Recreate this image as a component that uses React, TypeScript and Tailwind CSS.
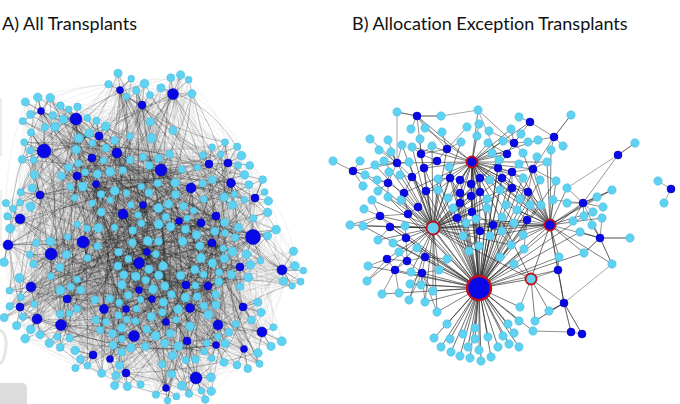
import React from "react"

type N = { x: number; y: number; r: number; d: boolean; ring?: boolean }
type E = { a: N; b: N; o: number; w: number; bend: number }

const LIGHT = "#5fd2f2"
const LIGHT_EDGE = "#45b6d8"
const DARK = "#0808e6"
const DARK_EDGE = "#0000a8"
const RED = "#c0121c"

function mulberry(seed: number) {
  let a = seed
  return () => {
    a = (a + 0x6d2b79f5) | 0
    let t = Math.imul(a ^ (a >>> 15), 1 | a)
    t = (t + Math.imul(t ^ (t >>> 7), 61 | t)) ^ t
    return ((t ^ (t >>> 14)) >>> 0) / 4294967296
  }
}

// dark hubs of panel A: x, y, radius
const hubsA: [number, number, number][] = [
  [120, 90, 3.6], [173, 94, 5.5], [142, 105, 4], [41, 111, 3.5], [76, 119, 6], [99, 136, 4],
  [44, 151, 7], [117, 153, 5], [92, 158, 4], [161, 170, 6], [209, 164, 4], [228, 163, 4],
  [191, 188, 5], [231, 183, 4.5], [77, 176, 4], [96, 184, 3.5], [40, 195, 4], [255, 198, 4],
  [20, 219, 5], [123, 214, 5], [143, 205, 3.5], [216, 216, 4], [201, 223, 4], [179, 221, 3.5],
  [83, 242, 6], [253, 237, 7.5], [8, 245, 5], [51, 254, 6], [212, 243, 4], [147, 252, 3.5],
  [139, 263, 5.5], [240, 267, 4], [282, 270, 5], [31, 287, 5], [186, 285, 4], [208, 286, 4],
  [67, 299, 4], [20, 307, 4], [139, 290, 3.5], [152, 299, 3.5], [104, 309, 4.5], [126, 309, 3.5],
  [190, 308, 4.5], [243, 307, 4], [37, 319, 5], [61, 325, 5.5], [166, 322, 3.5], [218, 325, 5],
  [262, 332, 5], [134, 336, 5.5], [187, 341, 4], [216, 345, 3.5], [244, 349, 3.5], [93, 355, 4],
  [110, 359, 3.5], [126, 373, 4], [196, 378, 6], [166, 388, 3.5],
]

function buildA() {
  const rnd = mulberry(11)
  const nodes: N[] = hubsA.map(([x, y, r]) => ({ x, y, r, d: true }))
  const free = (x: number, y: number, r: number, gap: number) =>
    nodes.every((n) => Math.hypot(n.x - x, n.y - y) > n.r + r + gap)
  const edges: E[] = []
  hubsA.forEach(([hx, hy, hr], hi) => {
    const cnt = 3 + Math.floor(rnd() * 3 + hr * 0.45)
    const dx = hx - 150
    const dy = hy - 235
    const far = Math.hypot(dx, dy)
    const out = Math.atan2(dy, dx)
    for (let k = 0; k < cnt; k++) {
      for (let t = 0; t < 14; t++) {
        const a = far > 105 ? out + (rnd() - 0.5) * 2.8 : rnd() * Math.PI * 2
        const dist = hr + 6 + rnd() * 12
        const x = hx + Math.cos(a) * dist
        const y = hy + Math.sin(a) * dist
        const r = 3.3 + rnd() * 1.3
        if (x < 3 || x > 306 || y < 64 || y > 401) continue
        if (free(x, y, r, 1.6)) {
          const n = { x, y, r, d: false }
          nodes.push(n)
          edges.push({ a: nodes[hi], b: n, o: 0.6, w: 0.6, bend: 0 })
          break
        }
      }
    }
  })
  for (let k = 0; k < 110; k++) {
    const a = rnd() * Math.PI * 2
    const s = Math.sqrt(rnd())
    const x = 150 + Math.cos(a) * s * 128
    const y = 233 + Math.sin(a) * s * 146
    const r = 3.3 + rnd() * 1.4
    if (free(x, y, r, 5)) nodes.push({ x, y, r, d: false })
  }
  const nh = hubsA.length
  for (let k = 0; k < 3200; k++) {
    const i = rnd() < 0.6 ? Math.floor(rnd() * nh) : Math.floor(rnd() * nodes.length)
    const j = Math.floor(rnd() * nodes.length)
    if (i === j) continue
    const strong = rnd() < 0.1
    edges.push({
      a: nodes[i],
      b: nodes[j],
      o: strong ? 0.45 : 0.11,
      w: strong ? 0.6 : 0.5,
      bend: (rnd() - 0.5) * 0.45,
    })
  }
  return { nodes, edges }
}

// panel B nodes: x, y, dark?
const rawB: [number, number, number][] = [
  [397, 112, 0], [417, 116, 1], [441, 116, 0], [478, 110, 0], [411, 129, 0], [425, 128, 0],
  [442, 132, 0], [467, 127, 0], [479, 124, 0], [489, 131, 0], [370, 139, 0], [388, 140, 0],
  [402, 145, 0], [420, 139, 0], [432, 146, 0], [447, 149, 1], [461, 142, 0], [477, 136, 0],
  [488, 143, 0], [492, 153, 0], [379, 150, 0], [391, 152, 0], [412, 147, 0], [421, 154, 1],
  [333, 161, 0], [353, 171, 1], [360, 161, 0], [375, 165, 0], [384, 161, 0], [397, 163, 1],
  [409, 162, 0], [424, 168, 1], [437, 161, 1], [449, 167, 0], [365, 175, 0], [377, 180, 0],
  [389, 172, 0], [400, 175, 0], [412, 177, 1], [438, 179, 0], [450, 178, 1], [460, 180, 1],
  [471, 184, 1], [480, 178, 1], [490, 180, 0], [498, 168, 1], [363, 186, 0], [378, 191, 0],
  [388, 183, 1], [404, 193, 1], [426, 191, 1], [438, 190, 0], [448, 198, 0], [460, 193, 1],
  [471, 196, 1], [480, 192, 1], [487, 199, 0], [372, 200, 0], [388, 197, 0], [401, 200, 0],
  [418, 207, 1], [408, 214, 1], [453, 208, 0], [460, 203, 1], [472, 212, 1], [487, 208, 0],
  [364, 209, 0], [380, 216, 1], [390, 227, 1], [350, 225, 0], [363, 226, 0], [457, 218, 1],
  [466, 223, 0], [476, 219, 0], [493, 225, 1],
  [519, 117, 0], [530, 122, 1], [571, 115, 0], [511, 129, 0], [521, 134, 0], [554, 137, 1],
  [514, 143, 1], [528, 142, 0], [538, 140, 0], [563, 146, 0], [503, 141, 0], [551, 150, 0],
  [635, 143, 0], [618, 155, 1], [507, 154, 1], [523, 153, 0], [537, 157, 0], [499, 160, 0],
  [519, 164, 0], [533, 169, 1], [547, 162, 0], [502, 178, 1], [512, 172, 1], [523, 178, 0],
  [540, 180, 0], [556, 181, 0], [567, 188, 0], [658, 181, 0], [671, 189, 1], [664, 203, 0],
  [612, 190, 0], [512, 188, 1], [528, 192, 1], [500, 190, 0], [597, 197, 0], [583, 203, 1],
  [520, 199, 0], [506, 205, 0], [517, 210, 0], [530, 205, 0], [541, 205, 0], [553, 200, 0],
  [567, 203, 0], [603, 207, 0], [593, 212, 0], [584, 216, 0], [602, 218, 0], [592, 225, 0],
  [573, 221, 0], [527, 220, 1], [514, 223, 0], [502, 217, 0],
  [405, 226, 0], [406, 238, 1], [393, 243, 0], [378, 240, 0], [368, 266, 0], [387, 259, 1],
  [395, 270, 1], [407, 261, 1], [399, 252, 0], [417, 248, 0], [425, 257, 1], [411, 272, 0],
  [422, 273, 1], [367, 281, 0], [382, 294, 0], [399, 293, 0], [410, 284, 0], [421, 285, 0],
  [409, 300, 0], [425, 302, 0], [433, 291, 0], [439, 270, 0], [447, 259, 0], [437, 312, 0],
  [463, 236, 0], [479, 246, 0], [469, 251, 0], [500, 257, 0], [514, 264, 0], [511, 245, 0],
  [523, 235, 0], [524, 249, 0], [559, 257, 0], [558, 270, 1], [584, 253, 0], [612, 264, 0],
  [600, 238, 1], [630, 238, 0], [580, 232, 0], [564, 303, 1], [549, 311, 0], [535, 321, 0],
  [533, 331, 0], [571, 332, 1], [582, 334, 1], [520, 307, 0], [519, 321, 0], [508, 324, 0],
  [514, 333, 0], [480, 231, 1], [490, 236, 0], [502, 231, 0],
  [447, 324, 0], [434, 338, 0], [441, 347, 0], [450, 339, 0], [451, 352, 0], [460, 356, 0],
  [463, 334, 0], [468, 347, 0], [470, 358, 0], [475, 328, 0], [475, 339, 0], [479, 350, 0],
  [481, 361, 0], [488, 337, 0], [491, 357, 0], [498, 347, 0], [503, 336, 0], [509, 344, 0],
  [519, 347, 0],
]

const manualB: [number, number, number, number][] = [
  [397, 112, 417, 116], [417, 116, 441, 116], [441, 116, 478, 110], [478, 110, 499, 160],
  [397, 112, 397, 163], [571, 115, 554, 137], [635, 143, 618, 155], [618, 155, 567, 188],
  [630, 238, 600, 238], [600, 238, 612, 264], [612, 264, 564, 303], [600, 238, 584, 253],
  [658, 181, 671, 189], [671, 189, 664, 203], [612, 190, 583, 203], [564, 303, 582, 334],
  [564, 303, 571, 332], [549, 311, 564, 303], [558, 270, 564, 303], [600, 238, 580, 232],
  [583, 203, 553, 200], [564, 303, 535, 321], [600, 238, 592, 225],
]

function buildB() {
  const rnd = mulberry(5)
  const hubs: N[] = [
    { x: 479, y: 288, r: 12, d: true, ring: true },
    { x: 433, y: 228, r: 6.5, d: false, ring: true },
    { x: 472, y: 162, r: 5.5, d: true, ring: true },
    { x: 550, y: 225, r: 5.5, d: true, ring: true },
    { x: 531, y: 279, r: 5.5, d: false, ring: true },
  ]
  const infl: [number, number][] = [[135, 0.55], [95, 0.45], [80, 0.5], [80, 0.42], [50, 0.3]]
  const nodes: N[] = rawB.map(([x, y, d]) => ({ x, y, r: d ? 4 : 4.2, d: d === 1 }))
  const anchors = [...hubs, ...nodes.filter((n) => n.d)]
  const keys = new Set<string>()
  const edges: E[] = []
  const add = (a: N, b: N, o = 0.72, w = 0.7) => {
    const k = a.x < b.x ? `${a.x},${a.y}-${b.x},${b.y}` : `${b.x},${b.y}-${a.x},${a.y}`
    if (keys.has(k) || a === b) return
    keys.add(k)
    edges.push({ a, b, o, w, bend: 0 })
  }
  for (const n of nodes) {
    if (n.x > 650) continue
    if (n.y > 312 && n.x > 425 && n.x < 525) {
      add(hubs[0], n, 0.85, 0.8)
      continue
    }
    const near = anchors
      .filter((a) => a !== n)
      .map((a) => ({ a, d: Math.hypot(a.x - n.x, a.y - n.y) }))
      .sort((p, q) => p.d - q.d)
    const take = n.d ? 2 : 1
    near.slice(0, take).forEach(({ a, d }) => {
      if (d < 60) add(a, n)
    })
    hubs.forEach((h, hi) => {
      const d = Math.hypot(h.x - n.x, h.y - n.y)
      const [R, p] = infl[hi]
      if (d < R && rnd() < (n.d ? p + 0.25 : p)) add(h, n, 0.8, 0.75)
    })
  }
  for (let i = 0; i < hubs.length; i++)
    for (let j = i + 1; j < hubs.length; j++) add(hubs[i], hubs[j], 0.85, 0.8)
  return { hubs, nodes, edges }
}

const A = buildA()
const B = buildB()

function edgePath(e: E) {
  const { a, b, bend } = e
  if (!bend) return `M${a.x.toFixed(1)} ${a.y.toFixed(1)}L${b.x.toFixed(1)} ${b.y.toFixed(1)}`
  const mx = (a.x + b.x) / 2
  const my = (a.y + b.y) / 2
  const cx = mx - (b.y - a.y) * bend
  const cy = my + (b.x - a.x) * bend
  return `M${a.x.toFixed(1)} ${a.y.toFixed(1)}Q${cx.toFixed(1)} ${cy.toFixed(1)} ${b.x.toFixed(1)} ${b.y.toFixed(1)}`
}

function Dot({ n }: { n: N }) {
  return (
    <circle
      cx={n.x}
      cy={n.y}
      r={n.r}
      fill={n.d ? DARK : LIGHT}
      stroke={n.ring ? RED : n.d ? DARK_EDGE : LIGHT_EDGE}
      strokeWidth={n.ring ? (n.r > 10 ? 2.4 : 1.8) : 0.5}
    />
  )
}

function PanelA() {
  const lights = A.nodes.filter((n) => !n.d)
  const darks = A.nodes.filter((n) => n.d)
  return (
    <svg width={320} height={364} viewBox="0 40 320 364" className="block">
      {/* faint remains of a cropped label on the left edge */}
      <rect x={0} y={98} width={2} height={58} fill="#ececec" />
      <rect x={0} y={190} width={2} height={56} fill="#efefef" />
      <path d="M0 330 Q7 334 6 346 Q5 360 0 364" fill="none" stroke="#e6e6e6" strokeWidth={3} />
      <path d="M0 383 L22 383 Q27 383 27 388 L27 404 L0 404 Z" fill="#dcdcdc" />
      <g fill="none" stroke="#1a1a1a">
        {A.edges.map((e, i) => (
          <path key={i} d={edgePath(e)} strokeOpacity={e.o} strokeWidth={e.w} />
        ))}
      </g>
      {lights.map((n, i) => (
        <Dot key={`l${i}`} n={n} />
      ))}
      {darks.map((n, i) => (
        <Dot key={`d${i}`} n={n} />
      ))}
    </svg>
  )
}

function PanelB() {
  return (
    <svg width={360} height={364} viewBox="320 40 360 364" className="block">
      <g fill="none" stroke="#2a2a2a">
        {B.edges.map((e, i) => (
          <path key={i} d={edgePath(e)} strokeOpacity={e.o} strokeWidth={e.w} />
        ))}
        {manualB.map(([x1, y1, x2, y2], i) => (
          <line key={`m${i}`} x1={x1} y1={y1} x2={x2} y2={y2} strokeOpacity={0.6} strokeWidth={0.7} />
        ))}
      </g>
      {B.nodes.map((n, i) => (
        <Dot key={i} n={n} />
      ))}
      {B.hubs.map((n, i) => (
        <Dot key={`h${i}`} n={n} />
      ))}
    </svg>
  )
}

export default function App() {
  return (
    <div
      className="w-[680px] h-[404px] bg-white flex overflow-hidden text-[#111]"
      style={{ fontFamily: "Lato, 'Liberation Sans', sans-serif", fontVariantLigatures: "none" }}
    >
      <div className="w-[320px] flex flex-col">
        <div className="h-[40px] pl-[2px] pt-[14px] text-[18px] leading-none">A) All Transplants</div>
        <PanelA />
      </div>
      <div className="w-[360px] flex flex-col">
        <div className="h-[40px] pl-[32px] pt-[14px] text-[18px] leading-none">
          B) Allocation Exception Transplants
        </div>
        <PanelB />
      </div>
    </div>
  )
}
